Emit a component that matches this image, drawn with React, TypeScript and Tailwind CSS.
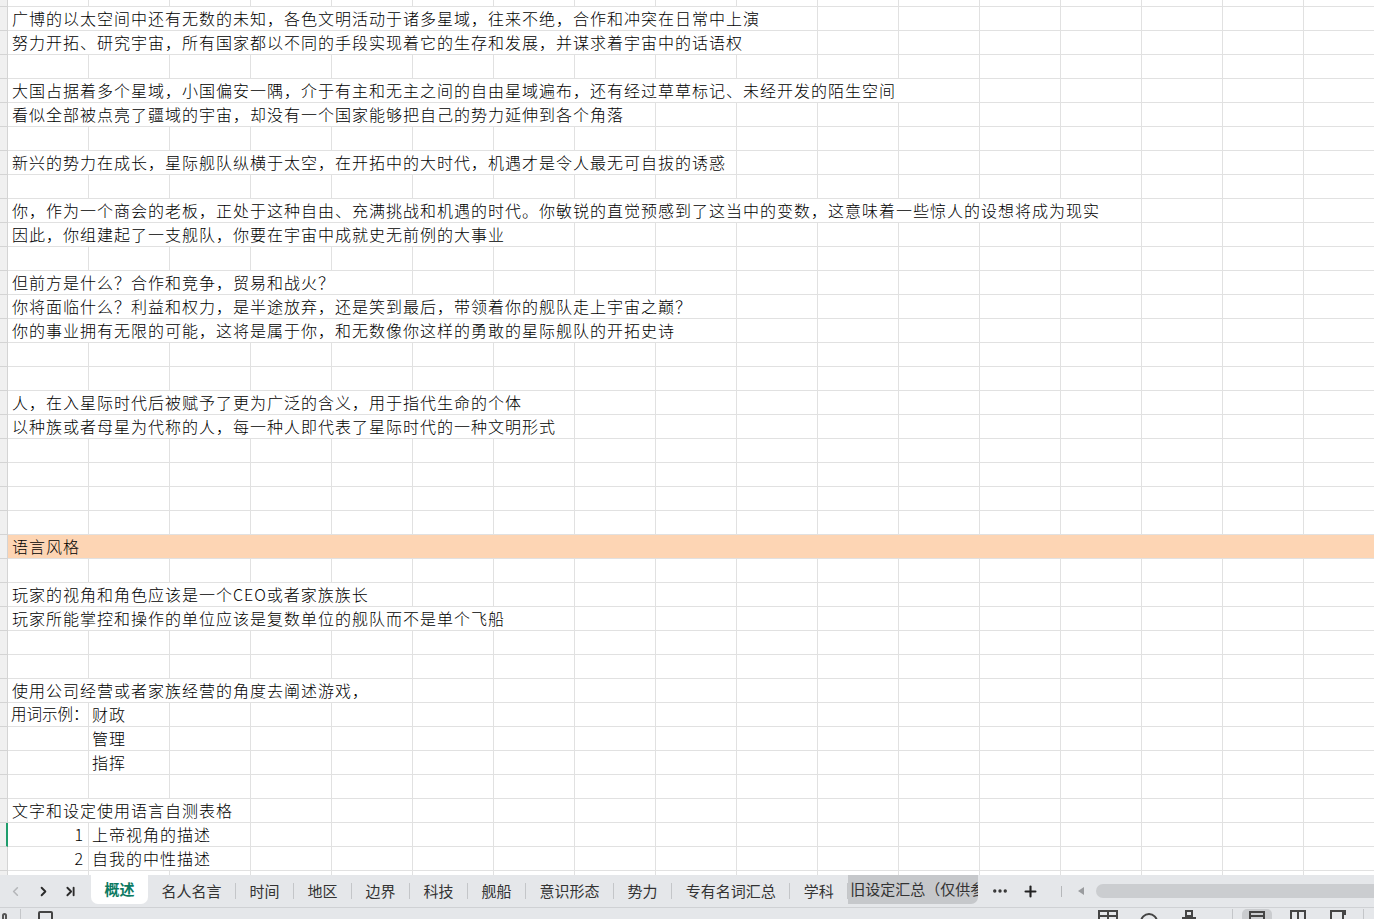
import { ChevronLeft, ChevronRight, ChevronLast, Ellipsis, Plus } from "lucide-react";

type Row = {
  a?: string;
  b?: string;
  num?: string;
  orange?: boolean;
  selected?: boolean;
};

const ROWS: Row[] = [
  { a: "广博的以太空间中还有无数的未知，各色文明活动于诸多星域，往来不绝，合作和冲突在日常中上演" },
  { a: "努力开拓、研究宇宙，所有国家都以不同的手段实现着它的生存和发展，并谋求着宇宙中的话语权" },
  {},
  { a: "大国占据着多个星域，小国偏安一隅，介于有主和无主之间的自由星域遍布，还有经过草草标记、未经开发的陌生空间" },
  { a: "看似全部被点亮了疆域的宇宙，却没有一个国家能够把自己的势力延伸到各个角落" },
  {},
  { a: "新兴的势力在成长，星际舰队纵横于太空，在开拓中的大时代，机遇才是令人最无可自拔的诱惑" },
  {},
  { a: "你，作为一个商会的老板，正处于这种自由、充满挑战和机遇的时代。你敏锐的直觉预感到了这当中的变数，这意味着一些惊人的设想将成为现实" },
  { a: "因此，你组建起了一支舰队，你要在宇宙中成就史无前例的大事业" },
  {},
  { a: "但前方是什么？合作和竞争，贸易和战火？" },
  { a: "你将面临什么？利益和权力，是半途放弃，还是笑到最后，带领着你的舰队走上宇宙之巅？" },
  { a: "你的事业拥有无限的可能，这将是属于你，和无数像你这样的勇敢的星际舰队的开拓史诗" },
  {},
  {},
  { a: "人，在入星际时代后被赋予了更为广泛的含义，用于指代生命的个体" },
  { a: "以种族或者母星为代称的人，每一种人即代表了星际时代的一种文明形式" },
  {},
  {},
  {},
  {},
  { a: "语言风格", orange: true },
  {},
  { a: "玩家的视角和角色应该是一个CEO或者家族族长" },
  { a: "玩家所能掌控和操作的单位应该是复数单位的舰队而不是单个飞船" },
  {},
  {},
  { a: "使用公司经营或者家族经营的角度去阐述游戏，" },
  { a: "用词示例：", b: "财政" },
  { b: "管理" },
  { b: "指挥" },
  {},
  { a: "文字和设定使用语言自测表格" },
  { num: "1", b: "上帝视角的描述", selected: true },
  { num: "2", b: "自我的中性描述" },
  {},
];

const COLS = 17;
const COL_W = 81;

function spanOf(text: string) {
  let w = 8;
  for (const ch of text) w += ch.charCodeAt(0) < 256 ? 9 : 17;
  return Math.max(1, Math.ceil(w / COL_W));
}

const cell = "h-full shrink-0 border-r border-b border-[#e1e1e1] flex items-center whitespace-nowrap pb-[1px]";

function Gutter({ selected, h }: { selected?: boolean; h: string }) {
  return (
    <div
      className={`${h} w-[8px] shrink-0 bg-[#f0f0f0] border-b border-[#d4d4d4] ${
        selected ? "border-r-2 border-r-[#1f9d6c]" : "border-r border-r-[#d4d4d4]"
      }`}
    />
  );
}

function SheetRow({ row }: { row: Row }) {
  const cells: React.ReactNode[] = [];
  let used = 0;

  if (row.orange) {
    return (
      <div className="flex h-[24px]">
        <Gutter h="h-[24px]" />
        <div className="flex-1 h-full bg-[#fdd5b4] border-b border-[#e1e1e1] flex items-center pl-[4px] pb-[1px]">
          {row.a}
        </div>
      </div>
    );
  }

  if (row.a) {
    const n = row.b ? 1 : spanOf(row.a);
    cells.push(
      <div
        key="a"
        className={`${cell} ${row.b ? "pl-[3px] tracking-[0px] text-[15.5px]" : "pl-[4px]"}`}
        style={{ width: n * COL_W }}
      >
        {row.a}
      </div>
    );
    used += n;
  } else if (row.num) {
    cells.push(
      <div key="a" className={`${cell} justify-end pr-[4px]`} style={{ width: COL_W }}>
        {row.num}
      </div>
    );
    used += 1;
  } else if (row.b) {
    cells.push(<div key="a" className={cell} style={{ width: COL_W }} />);
    used += 1;
  }

  if (row.b) {
    const n = spanOf(row.b);
    cells.push(
      <div key="b" className={`${cell} pl-[3px]`} style={{ width: n * COL_W }}>
        {row.b}
      </div>
    );
    used += n;
  }

  for (let i = used; i < COLS; i++) {
    cells.push(<div key={i} className={cell} style={{ width: COL_W }} />);
  }

  return (
    <div className="flex h-[24px]">
      <Gutter h="h-[24px]" selected={row.selected} />
      {cells}
    </div>
  );
}

function EmptyRow({ h }: { h: string }) {
  return (
    <div className={`flex ${h}`}>
      <Gutter h={h} />
      {Array.from({ length: COLS }).map((_, i) => (
        <div key={i} className={cell} style={{ width: COL_W }} />
      ))}
    </div>
  );
}

const TABS = ["名人名言", "时间", "地区", "边界", "科技", "舰船", "意识形态", "势力", "专有名词汇总", "学科"];

function TabBar() {
  return (
    <div className="h-[33px] bg-[#e5e7ea] border-b border-[#cfd1d4] flex items-start text-[15px] text-[#333]">
      <div className="w-[91px] h-[32px] flex items-center shrink-0">
        <div className="w-[29px] flex justify-center pl-[1px]">
          <ChevronLeft size={15} strokeWidth={2.5} className="text-[#b4b6b9]" />
        </div>
        <div className="w-[28px] flex justify-center">
          <ChevronRight size={15} strokeWidth={3} className="text-[#2b2b2b]" />
        </div>
        <div className="w-[26px] flex justify-center">
          <ChevronLast size={15} strokeWidth={3} className="text-[#2b2b2b]" />
        </div>
      </div>
      <div className="h-[29px] w-[57px] shrink-0 bg-white rounded-b-[7px] flex items-center justify-center font-semibold text-[#0b7a62]">
        概述
      </div>
      {TABS.map((t, i) => (
        <div key={t} className="flex items-center h-[32px] shrink-0">
          {i > 0 && <div className="w-px h-[16px] bg-[#c4c6c9]" />}
          <div className="px-[13.5px] h-full flex items-center">{t}</div>
        </div>
      ))}
      <div className="w-px h-[16px] bg-[#c4c6c9] self-center" />
      <div className="h-[29px] w-[130px] shrink-0 overflow-hidden bg-[#c6c8cb] rounded-br-[7px] flex items-center pl-[2px] whitespace-nowrap">
        旧设定汇总（仅供参考）
      </div>
      <div className="h-[32px] flex items-center shrink-0">
        <Ellipsis size={18} strokeWidth={2.5} className="ml-[13px] text-[#333]" />
        <Plus size={17} strokeWidth={3} className="ml-[13px] text-[#222]" />
        <div className="ml-[22px] w-px h-[11px] bg-[#b5b7ba]" />
        <div className="ml-[16px] w-0 h-0 border-y-[4px] border-y-transparent border-r-[6px] border-r-[#9a9c9f]" />
      </div>
      <div className="ml-[12px] mt-[9px] h-[14px] flex-1 rounded-l-full bg-[#cbcdd0]" />
    </div>
  );
}

function StatusBar() {
  return (
    <div className="h-[11px] bg-[#e5e7ea] overflow-hidden flex items-start">
      <div className="ml-[2px] mt-[5px] w-[5px] h-[8px] border-2 border-[#555] rounded-full" />
      <div className="ml-[13px] mt-[1px] w-px h-[10px] bg-[#c4c6c9]" />
      <div className="ml-[17px] mt-[3px] w-[15px] h-[12px] border-2 border-[#444] rounded-[2px]" />
      <div className="flex-1" />
      <svg width="22" height="11" viewBox="0 0 22 11" className="shrink-0">
        <rect x="2" y="3" width="18" height="12" fill="none" stroke="#444" strokeWidth="2" />
        <line x1="2" y1="8" x2="20" y2="8" stroke="#444" strokeWidth="2" />
        <line x1="11" y1="3" x2="11" y2="11" stroke="#444" strokeWidth="2" />
      </svg>
      <svg width="20" height="11" viewBox="0 0 20 11" className="ml-[20px] shrink-0">
        <circle cx="10" cy="14" r="8" fill="none" stroke="#444" strokeWidth="2" />
      </svg>
      <svg width="16" height="11" viewBox="0 0 16 11" className="ml-[22px] shrink-0">
        <rect x="5" y="3" width="6" height="5" fill="none" stroke="#444" strokeWidth="2" />
        <line x1="1" y1="10" x2="15" y2="10" stroke="#444" strokeWidth="2" />
      </svg>
      <div className="ml-[35px] mt-[1px] w-px h-[10px] bg-[#c4c6c9]" />
      <div className="ml-[9px] mt-[1px] w-[30px] h-[12px] bg-[#cacccf] rounded-t-[5px] flex justify-center">
        <svg width="18" height="11" viewBox="0 0 18 11">
          <rect x="2" y="3" width="14" height="10" fill="none" stroke="#444" strokeWidth="2" />
          <line x1="2" y1="7" x2="16" y2="7" stroke="#444" strokeWidth="2" />
        </svg>
      </div>
      <svg width="18" height="11" viewBox="0 0 18 11" className="ml-[17px] shrink-0">
        <rect x="2" y="3" width="14" height="10" fill="none" stroke="#444" strokeWidth="2" />
        <line x1="9" y1="3" x2="9" y2="11" stroke="#444" strokeWidth="2" />
      </svg>
      <svg width="18" height="11" viewBox="0 0 18 11" className="ml-[22px] shrink-0">
        <rect x="2" y="3" width="12" height="10" fill="none" stroke="#444" strokeWidth="2" />
        <path d="M14 3 h2 v4" fill="none" stroke="#444" strokeWidth="2" />
      </svg>
      <div className="ml-[16px] mt-[1px] w-px h-[10px] bg-[#c4c6c9] mr-[10px]" />
    </div>
  );
}

export default function App() {
  return (
    <div className="w-[1374px] h-[919px] overflow-hidden bg-white flex flex-col font-['Noto_Sans_CJK_SC','Noto_Sans',sans-serif] text-[16px] tracking-[1px] text-black">
      <div className="h-[875px] overflow-hidden shrink-0 font-light">
        <EmptyRow h="h-[7px]" />
        {ROWS.map((r, i) => (
          <SheetRow key={i} row={r} />
        ))}
        <EmptyRow h="h-[24px]" />
      </div>
      <div className="tracking-normal">
        <TabBar />
        <StatusBar />
      </div>
    </div>
  );
}
